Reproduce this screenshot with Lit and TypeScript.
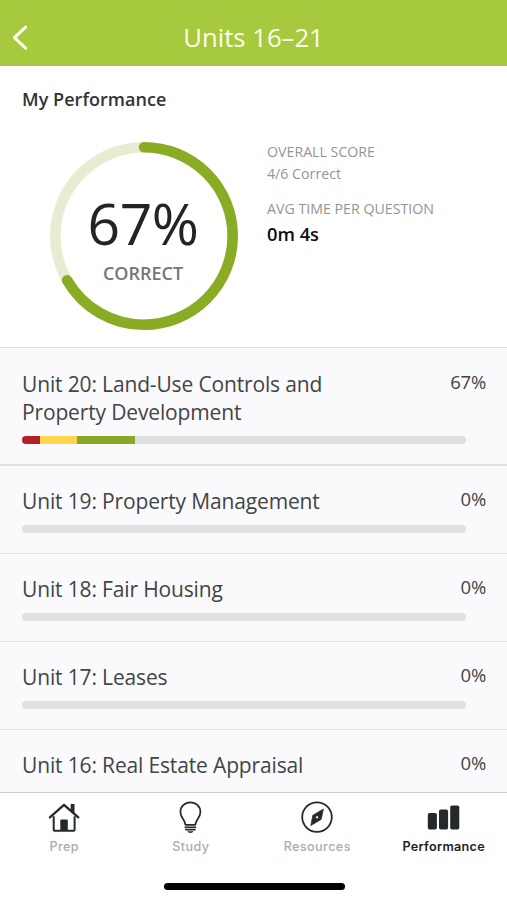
import { LitElement, html, css, svg } from "lit";
import { customElement, property } from "lit/decorators.js";

interface Segment {
  kind: string;
  width: number;
}
interface Unit {
  title: string;
  percent: number;
  segments: Segment[];
}

const UNITS: Unit[] = [
  {
    title: "Unit 20: Land-Use Controls and Property Development",
    percent: 67,
    segments: [
      { kind: "wrong", width: 4 },
      { kind: "partial", width: 8.5 },
      { kind: "right", width: 12.9 },
    ],
  },
  { title: "Unit 19: Property Management", percent: 0, segments: [] },
  { title: "Unit 18: Fair Housing", percent: 0, segments: [] },
  { title: "Unit 17: Leases", percent: 0, segments: [] },
  { title: "Unit 16: Real Estate Appraisal", percent: 0, segments: [] },
];

const ICONS = {
  prep: svg`
    <path d="M5.7 15.2V28.2Q5.7 29.8 7.3 29.8H25Q26.6 29.8 26.6 28.2V15.2" fill="none" stroke="#24292b" stroke-width="2"/>
    <path d="M1.9 16.4L16 3.8L30.3 16.4" fill="none" stroke="#24292b" stroke-width="2.3" stroke-linecap="round" stroke-linejoin="round"/>
    <path d="M22.7 3H26.5V12.8L22.7 9.3Z" fill="#24292b"/>
    <path d="M12.3 30V19.6Q12.3 18.6 13.3 18.6H18.8Q19.8 18.6 19.8 19.6V30Z" fill="#24292b"/>`,
  study: svg`
    <path d="M11.4 23.8C11.4 18.6 6.4 17 6.4 10.9C6.4 5.5 10.7 1.3 16.4 1.3S26.4 5.5 26.4 10.9C26.4 17 21.4 18.6 21.4 23.8Z" fill="none" stroke="#24292b" stroke-width="1.7" stroke-linejoin="round"/>
    <path d="M11.2 26.2H21.6M11.8 28.6H21" fill="none" stroke="#24292b" stroke-width="1.6" stroke-linecap="round"/>
    <path d="M13.2 30.2H19.6Q18.6 31.9 16.4 31.9T13.2 30.2Z" fill="#24292b"/>`,
  resources: svg`
    <circle cx="16" cy="16.1" r="14.8" fill="none" stroke="#24292b" stroke-width="1.8"/>
    <path fill-rule="evenodd" d="M22.4 8L20.2 18.4L9.8 24.6L11.8 14.3ZM16.1 14.7A1.5 1.5 0 1 0 16.1 17.7A1.5 1.5 0 1 0 16.1 14.7Z" fill="#24292b" stroke="#24292b" stroke-width=".7" stroke-linejoin="round"/>`,
  performance: svg`
    <rect x=".8" y="11.9" width="9.1" height="16.6" rx="1.8" fill="#24292b"/>
    <rect x="12" y="8.4" width="9.1" height="20.1" rx="1.8" fill="#24292b"/>
    <rect x="23.2" y="4.5" width="9.1" height="24" rx="1.8" fill="#24292b"/>`,
};

@customElement("score-ring")
class ScoreRing extends LitElement {
  @property({ type: Number }) correct = 0;
  @property({ type: Number }) total = 1;

  static styles = css`
    :host { display: grid; width: 190px; height: 190px; }
    svg, .label { grid-area: 1 / 1; }
    .track, .arc { fill: none; stroke-width: 10.6; }
    .track { stroke: #e6edd3; }
    .arc { stroke: #8aab24; stroke-linecap: round; }
    .label { display: flex; flex-direction: column; align-items: center; padding-top: 45px; }
    .value { font-size: 57px; line-height: 74px; letter-spacing: -0.5px; color: #212526; margin-left: -2px; }
    .caption { margin-top: 1px; font-size: 18px; line-height: 24px; font-weight: 600; color: #747677; margin-left: -2px; }
  `;

  render() {
    const ratio = this.correct / this.total;
    return html`
      <svg width="190" height="190" viewBox="0 0 190 190">
        <circle class="track" cx="95" cy="95" r="88.7" />
        <circle class="arc" cx="95" cy="95" r="88.7" pathLength="100"
          stroke-dasharray="${ratio * 100} 100" transform="rotate(-90 95 95)" />
      </svg>
      <div class="label">
        <span class="value">${Math.round(ratio * 100)}%</span>
        <span class="caption">CORRECT</span>
      </div>`;
  }
}

@customElement("unit-row")
class UnitRow extends LitElement {
  @property({ attribute: false }) unit!: Unit;

  static styles = css`
    :host { display: block; padding: 21px 21px 20px 22px; border-bottom: 1px solid #e0e1e2; }
    :host(:first-child) { padding-top: 22px; border-bottom: 2px solid #dfe0e1; }
    .head { display: flex; justify-content: space-between; align-items: flex-start; }
    .title { width: 320px; font-size: 21px; line-height: 28px; letter-spacing: -0.15px; color: #414547; }
    .percent { font-size: 18.5px; line-height: 24px; color: #414547; letter-spacing: -0.2px; }
    .bar { display: flex; width: 443.5px; height: 8px; margin-top: 10px; border-radius: 4px; overflow: hidden; background: #dfe0e1; }
    .wrong { background: #b3202c; }
    .partial { background: #fdd44b; }
    .right { background: #8aa827; }
  `;

  render() {
    return html`
      <div class="head">
        <span class="title">${this.unit.title}</span>
        <span class="percent">${this.unit.percent}%</span>
      </div>
      <div class="bar">
        ${this.unit.segments.map((s) => html`<div class=${s.kind} style="width:${s.width}%"></div>`)}
      </div>`;
  }
}

@customElement("app-root")
class AppRoot extends LitElement {
  static styles = css`
    :host { display: flex; flex-direction: column; height: 900px; overflow: hidden; background: #fff; font-family: "Open Sans", "Noto Sans", sans-serif; }
    header { flex: none; display: grid; grid-template-columns: 60px 1fr 60px; align-items: center; height: 66px; padding-top: 9px; box-sizing: border-box; background: #a6c93d; color: #fcfeee; }
    .back { margin-left: 11px; }
    h1 { margin: 1px 0 0; text-align: center; font-size: 25.7px; line-height: 36px; font-weight: 400; }
    .summary { flex: none; height: 281px; box-sizing: border-box; padding: 21px 22px 0; }
    h2 { margin: 0; font-size: 18px; line-height: 25px; font-weight: 600; letter-spacing: 0.05px; color: #303436; }
    .overview { display: flex; margin-top: 29px; padding-left: 27px; gap: 28px; }
    .stats { display: flex; flex-direction: column; color: #949596; font-size: 14.2px; line-height: 22px; }
    .time-label { margin-top: 13px; }
    .time { margin-top: 1px; font-size: 18.3px; line-height: 26px; font-weight: 600; color: #0c0d0d; }
    .units { flex: 1; min-height: 0; display: flex; border-top: 1px solid #dcddde; padding-bottom: 4px; background: #fafafc; }
    .list { flex: 1; overflow: hidden; }
    nav { flex: none; display: grid; grid-template-columns: repeat(4, 1fr); height: 83px; border-top: 1px solid #cdced0; padding: 8px 0 0 1px; box-sizing: border-box; background: #fff; font-family: Inter, sans-serif; }
    .tab { display: flex; flex-direction: column; align-items: center; font-size: 12.6px; line-height: 18px; font-weight: 500; letter-spacing: 0.42px; color: #acacad; }
    .tab svg { width: 33px; height: 34px; margin-bottom: 3px; }
    .active { color: #1f2223; font-weight: 600; letter-spacing: 0.3px; }
    .home { flex: none; height: 25px; display: flex; justify-content: center; align-items: flex-start; }
    .home div { width: 181px; height: 7px; margin: 8px 0 0 1px; border-radius: 4px; background: #000; }
  `;

  render() {
    return html`
      <header>
        <svg class="back" width="18" height="28" viewBox="0 0 18 28">
          <path d="M14.6 3.2L3.4 13.7L14.6 24.2" fill="none" stroke="#fcfeee" stroke-width="3.2" stroke-linecap="round" stroke-linejoin="round" />
        </svg>
        <h1>Units 16–21</h1>
      </header>
      <section class="summary">
        <h2>My Performance</h2>
        <div class="overview">
          <score-ring correct="4" total="6"></score-ring>
          <div class="stats">
            <span>OVERALL SCORE</span>
            <span>4/6 Correct</span>
            <span class="time-label">AVG TIME PER QUESTION</span>
            <span class="time">0m 4s</span>
          </div>
        </div>
      </section>
      <section class="units">
        <div class="list">${UNITS.map((u) => html`<unit-row .unit=${u}></unit-row>`)}</div>
      </section>
      <nav>
        ${this.tab("Prep", ICONS.prep)}
        ${this.tab("Study", ICONS.study)}
        ${this.tab("Resources", ICONS.resources)}
        ${this.tab("Performance", ICONS.performance, true)}
      </nav>
      <div class="home"><div></div></div>`;
  }

  private tab(label: string, icon: unknown, active = false) {
    return html`<div class="tab ${active ? "active" : ""}">
      <svg viewBox="0 0 33 34">${icon}</svg><span>${label}</span>
    </div>`;
  }
}
